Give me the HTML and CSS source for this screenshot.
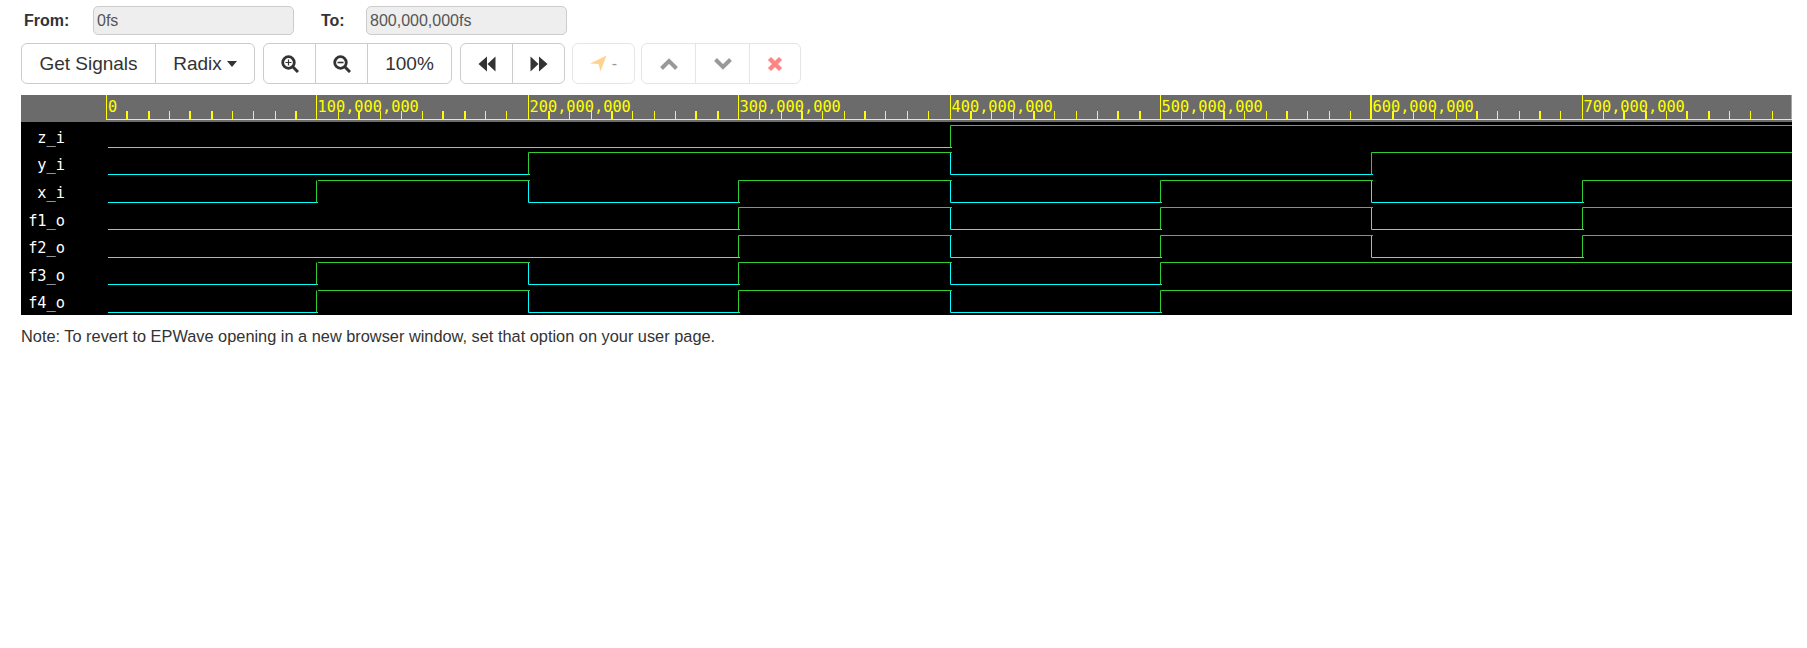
FILE: index.html
```html
<!DOCTYPE html>
<html lang="en">
<head>
    <meta charset="UTF-8">
    <meta name="viewport" content="width=device-width, initial-scale=1.0">
    <title>EPWave</title>
    <link rel="stylesheet" href="styles.css">
</head>
<body>
    <div class="range">
        <label class="range-label" for="from">From:</label>
        <input class="range-input" type="text" id="from" value="0fs" disabled>
        <label class="range-label range-label-to" for="to">To:</label>
        <input class="range-input" type="text" id="to" value="800,000,000fs" disabled>
    </div>

    <div class="tools">
        <div class="group">
            <button class="btn btn-signals">Get Signals</button>
            <button class="btn btn-radix">Radix <span class="caret"></span></button>
        </div>
        <div class="group">
            <button class="btn btn-icon">
                <svg class="icon icon-lens" viewBox="0 0 18 18"><circle cx="7.500" cy="7.500" r="5.800" fill="none" stroke="#333" stroke-width="2.800"/><path d="M12 12l5 5" stroke="#333" stroke-width="3"/><path d="M7.500 4.500v6M4.500 7.500h6" stroke="#333" stroke-width="1.200"/></svg>
            </button>
            <button class="btn btn-icon">
                <svg class="icon icon-lens" viewBox="0 0 18 18"><circle cx="7.500" cy="7.500" r="5.800" fill="none" stroke="#333" stroke-width="2.800"/><path d="M12 12l5 5" stroke="#333" stroke-width="3"/><path d="M4.500 7.500h6" stroke="#333" stroke-width="1.600"/></svg>
            </button>
            <button class="btn btn-zoom">100%</button>
        </div>
        <div class="group group-nav">
            <button class="btn btn-icon">
                <svg class="icon" viewBox="0 0 18 16"><path d="M0.500 8L9 0.500V15.500zM9.500 8L17.500 0.500V15.500z" fill="#333"/></svg>
            </button>
            <button class="btn btn-icon">
                <svg class="icon" viewBox="0 0 18 16"><path d="M17.500 8L9 0.500V15.500zM8.500 8L0.500 0.500V15.500z" fill="#333"/></svg>
            </button>
        </div>
        <div class="group group-mark off">
            <button class="btn btn-mark">
                <svg class="icon icon-arrow" viewBox="0 0 17 17"><path d="M0 8.500L16.500 0.500L10.500 16.500L8.500 9z" fill="#ffd28f"/></svg>
                <span class="mark-text">-</span>
            </button>
        </div>
        <div class="group off">
            <button class="btn btn-step">
                <svg class="icon" viewBox="0 0 18 13"><path d="M1.500 11L9 3.500L16.500 11" fill="none" stroke="#999" stroke-width="4"/></svg>
            </button>
            <button class="btn btn-step">
                <svg class="icon" viewBox="0 0 18 13"><path d="M1.500 2L9 9.500L16.500 2" fill="none" stroke="#999" stroke-width="4"/></svg>
            </button>
            <button class="btn btn-close">
                <svg class="icon" viewBox="0 0 13 13"><path d="M2 2L11 11M11 2L2 11" fill="none" stroke="#ff8585" stroke-width="3.600"/></svg>
            </button>
        </div>
    </div>

    <svg class="wave" width="1771" height="220" viewBox="21 95 1771 220">
        <rect class="ruler-bg" x="21" y="95" width="1771" height="27"/>
        <rect x="21" y="122" width="1771" height="193"/>

        <!-- ruler -->
        <path class="ruler-line" stroke-width="1" d="M106 119.500H1792M106.500 95V120M316.500 95V120M528.500 95V120M738.500 95V120M950.500 95V120M1160.500 95V120M1582.500 95V120M1792 95V120"/>
        <path class="ruler-line" stroke-width="1" d="M169.500 111v8M232.500 111v8M253.500 111v8M275.500 111v8M338.500 111v8M380.500 111v8M401.500 111v8M422.500 111v8M485.500 111v8M506.500 111v8M569.500 111v8M591.500 111v8M632.500 111v8M654.500 111v8M675.500 111v8M759.500 111v8M781.500 111v8M822.500 111v8M844.500 111v8M885.500 111v8M907.500 111v8M928.500 111v8M991.500 111v8M1013.500 111v8M1054.500 111v8M1076.500 111v8M1097.500 111v8M1181.500 111v8M1203.500 111v8M1244.500 111v8M1266.500 111v8M1307.500 111v8M1329.500 111v8M1350.500 111v8M1413.500 111v8M1434.500 111v8M1456.500 111v8M1497.500 111v8M1519.500 111v8M1560.500 111v8M1603.500 111v8M1666.500 111v8M1729.500 111v8M1750.500 111v8M1772.500 111v8"/>
        <path class="ruler-line" stroke-width="2" d="M1371 95V120M127 111v8M149 111v8M190 111v8M212 111v8M296 111v8M359 111v8M443 111v8M465 111v8M549 111v8M612 111v8M696 111v8M718 111v8M802 111v8M865 111v8M971 111v8M1034 111v8M1118 111v8M1140 111v8M1224 111v8M1287 111v8M1393 111v8M1477 111v8M1540 111v8M1624 111v8M1646 111v8M1687 111v8M1709 111v8"/>
        <g class="ruler-text">
            <text x="108" y="112">0</text>
            <text x="317.500" y="112">100,000,000</text>
            <text x="529.500" y="112">200,000,000</text>
            <text x="739.500" y="112">300,000,000</text>
            <text x="951.500" y="112">400,000,000</text>
            <text x="1161.500" y="112">500,000,000</text>
            <text x="1372.500" y="112">600,000,000</text>
            <text x="1583.500" y="112">700,000,000</text>
        </g>

        <!-- signal names -->
        <g class="signal-name">
            <text x="65" y="143">z_i</text>
            <text x="65" y="170">y_i</text>
            <text x="65" y="198">x_i</text>
            <text x="65" y="226">f1_o</text>
            <text x="65" y="253">f2_o</text>
            <text x="65" y="281">f3_o</text>
            <text x="65" y="308">f4_o</text>
        </g>

        <!-- low level and falling edges -->
        <path class="trace-low" d="M108 147.500H952
            M108 174.500H530M950.500 152.500V174.500H1373
            M108 202.500H318M528.500 180.500V202.500H740M950.500 180.500V202.500H1162M1371.500 180.500V202.500H1584
            M108 229.500H740M950.500 207.500V229.500H1162M1371.500 207.500V229.500H1584
            M108 257.500H740M950.500 235.500V257.500H1162M1371.500 235.500V257.500H1584
            M108 284.500H318M528.500 262.500V284.500H740M950.500 262.500V284.500H1162
            M108 312.500H318M528.500 290.500V312.500H740M950.500 290.500V312.500H1162"/>
        <!-- high level and rising edges -->
        <path class="trace-high" d="M950.500 147.500V125.500H1792
            M528.500 174.500V152.500H952M1371.500 174.500V152.500H1792
            M316.500 202.500V180.500M318 180.500H530M738.500 202.500V180.500H952M1160.500 202.500V180.500H1373M1582.500 202.500V180.500H1792
            M738.500 229.500V207.500H952M1160.500 229.500V207.500H1373M1582.500 229.500V207.500H1792
            M738.500 257.500V235.500H952M1160.500 257.500V235.500H1373M1582.500 257.500V235.500H1792
            M316.500 284.500V262.500M318 262.500H530M738.500 284.500V262.500H952M1160.500 284.500V262.500H1792
            M316.500 312.500V290.500M318 290.500H530M738.500 312.500V290.500H952M1160.500 312.500V290.500H1792"/>
    </svg>

    <p class="note">Note: To revert to EPWave opening in a new browser window, set that option on your user page.</p>
</body>
</html>
```

FILE: styles.css
```css
body{
    margin: 0;
    padding: 6px 15px 0 21px;
    font-family: "Liberation Sans", Arial, sans-serif;
    color: #333;
}
.range{
    display: flex;
    align-items: center;
    height: 29px;
}
.range-label{
    width: 72px;
    padding-left: 3px;
    box-sizing: border-box;
    font-size: 16px;
    font-weight: 700;
}
.range-label-to{
    width: 45px;
    margin-left: 27px;
    padding-left: 0;
}
.range-input{
    box-sizing: border-box;
    width: 201px;
    height: 29px;
    padding: 0 3px;
    border: 1px solid #ccc;
    border-radius: 5px;
    background: #eee;
    color: #555;
    font-family: inherit;
    font-size: 16px;
}
.tools{
    display: flex;
    gap: 8px;
    margin-top: 8px;
}
.group{
    display: flex;
}
.group-nav{
    margin-right: -1px;
}
.group-mark{
    margin-right: -2px;
}
.btn{
    display: flex;
    align-items: center;
    justify-content: center;
    box-sizing: border-box;
    height: 41px;
    margin: 0 0 0 -1px;
    padding: 0;
    border: 1px solid #ccc;
    background: #fff;
    color: #333;
    font-family: inherit;
    font-size: 19px;
}
.group .btn:first-child{
    margin-left: 0;
    border-radius: 6px 0 0 6px;
}
.group .btn:last-child{
    border-radius: 0 6px 6px 0;
}
.group .btn:only-child{
    border-radius: 6px;
}
.off .btn{
    border-color: #e5e5e5;
}
.btn-signals{
    width: 135px;
}
.btn-radix{
    width: 100px;
    gap: 5px;
}
.btn-icon{
    width: 53px;
}
.btn-zoom{
    width: 85px;
}
.btn-mark{
    width: 63px;
    gap: 5px;
}
.btn-step{
    width: 55px;
}
.btn-close{
    width: 52px;
}
.caret{
    width: 0;
    height: 0;
    border-top: 6px solid #333;
    border-left: 5.500px solid transparent;
    border-right: 5.500px solid transparent;
}
.icon{
    display: block;
    width: 18px;
    height: 16px;
}
.icon-lens{
    height: 18px;
}
.icon-arrow{
    width: 17px;
    height: 17px;
}
.mark-text{
    color: #999;
    font-size: 16px;
}
.wave{
    display: block;
    margin-top: 11px;
}
.ruler-bg{
    fill: #6b6b6b;
}
.ruler-line{
    fill: none;
    stroke: #ff0;
}
.ruler-text text{
    fill: #ff0;
    font-family: "DejaVu Sans Mono", monospace;
    font-size: 15.300px;
}
.signal-name text{
    fill: #fff;
    font-family: "DejaVu Sans Mono", monospace;
    font-size: 15.300px;
    text-anchor: end;
}
.trace-low{
    fill: none;
    stroke: #0ff;
}
.trace-high{
    fill: none;
    stroke: #32cd32;
}
.note{
    margin: 11px 0 0;
    font-size: 16.350px;
    line-height: 20px;
}
```
